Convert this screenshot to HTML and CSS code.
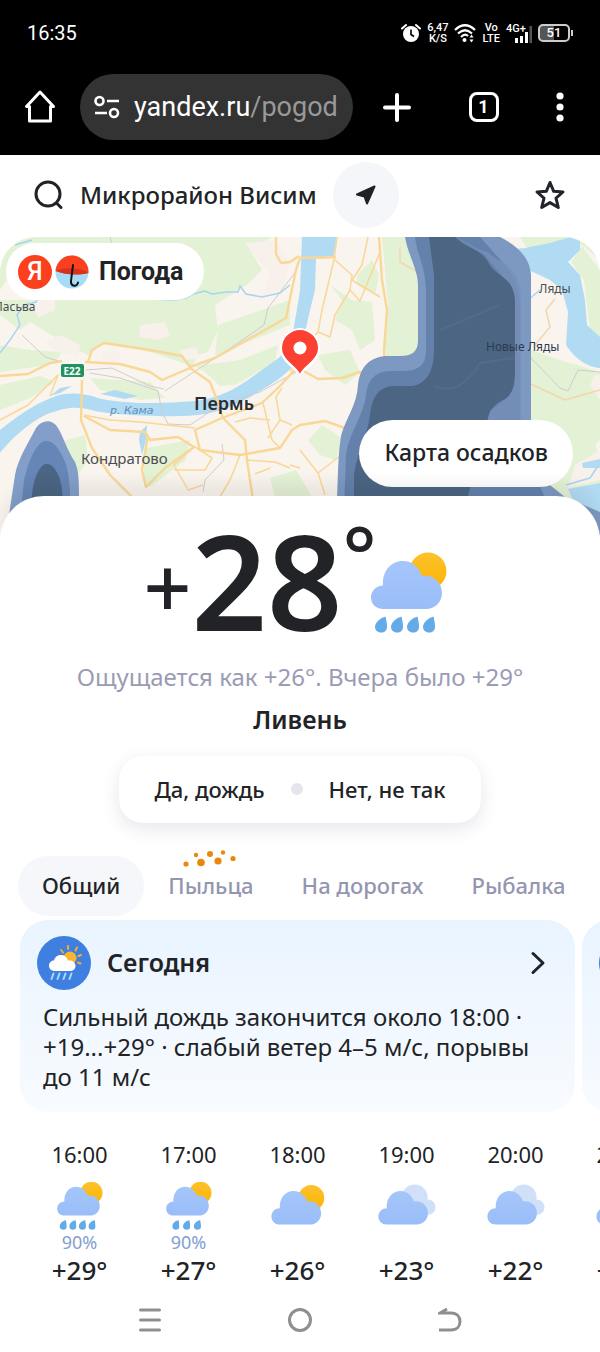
FILE: index.html
```html
<!DOCTYPE html>
<html lang="ru">
<head>
    <meta charset="UTF-8">
    <meta name="viewport" content="width=device-width, initial-scale=1">
    <title>Погода</title>
    <link rel="stylesheet" href="styles.css">
</head>
<body>
    <!-- icons used more than once -->
    <svg class="sprite" aria-hidden="true">
        <defs>
            <linearGradient id="cloudFill" x1="0" y1="0" x2="0" y2="1">
                <stop offset="0" stop-color="#a5c6fa"/>
                <stop offset="1" stop-color="#99bdf8"/>
            </linearGradient>
            <linearGradient id="sunFill" x1="0" y1="0" x2="0" y2="1">
                <stop offset="0" stop-color="#fcc22c"/>
                <stop offset="1" stop-color="#fdb304"/>
            </linearGradient>
        </defs>
        <symbol id="cloud" viewBox="0 0 80 58">
            <path fill="url(#cloudFill)" d="M14 57C7 57 2 52 2 45.500C2 38.500 7.500 33.500 14 33.500C13 19 22 9 34 9C43 9 50 15 53 24C64 22 73 30 73 41C73 50 66 57 57 57Z"/>
        </symbol>
        <symbol id="suncloud" viewBox="0 0 80 58">
            <circle cx="59" cy="19" r="18.500" fill="url(#sunFill)"/>
            <use href="#cloud" width="80" height="58"/>
        </symbol>
        <symbol id="clouds" viewBox="0 0 86 58">
            <circle cx="54" cy="18" r="18.500" fill="#cfe0f8"/>
            <circle cx="73" cy="32" r="11" fill="#cfe0f8"/>
            <use href="#cloud" width="80" height="58"/>
        </symbol>
        <symbol id="drop" viewBox="0 0 12 17">
            <path fill="#63abe8" d="M10.500 .5C11.300 4 12 7.500 12 11C12 14.500 9.500 16.500 6 16.500C2.500 16.500 0 14 0 11C0 6 5.500 2 10.500 .5Z"/>
        </symbol>
        <symbol id="rain4" viewBox="0 0 80 82">
            <use href="#suncloud" width="80" height="58"/>
            <use href="#drop" x="6" y="64" width="12" height="17"/>
            <use href="#drop" x="22" y="64" width="12" height="17"/>
            <use href="#drop" x="38" y="64" width="12" height="17"/>
            <use href="#drop" x="54" y="64" width="12" height="17"/>
        </symbol>
        <symbol id="rain3" viewBox="0 0 80 82">
            <use href="#suncloud" width="80" height="58"/>
            <use href="#drop" x="12" y="64" width="12" height="17"/>
            <use href="#drop" x="30" y="64" width="12" height="17"/>
            <use href="#drop" x="48" y="64" width="12" height="17"/>
        </symbol>
    </svg>

    <div class="status">
        <span class="clock">16:35</span>
        <div class="signals">
            <svg width="20" height="20" viewBox="0 0 20 20">
                <circle cx="10" cy="11" r="8" fill="#fff"/>
                <path d="M1 5.500L5 2M19 5.500L15 2" stroke="#fff" stroke-width="2" stroke-linecap="round"/>
                <path d="M10 6.500V11.500L13 13.500" fill="none" stroke="#000" stroke-width="1.600"/>
            </svg>
            <span class="mini">6,47<br>K/S</span>
            <svg width="22" height="20" viewBox="0 0 22 20">
                <g fill="none" stroke="#fff" stroke-width="2.200">
                    <path d="M1 7Q11 -2.500 21 7"/>
                    <path d="M4 10.500Q11 4 18 10.500"/>
                    <path d="M7 14Q11 10 14 13"/>
                </g>
                <circle cx="10.500" cy="17" r="2" fill="#fff"/>
                <path d="M17.500 11.500L19.500 14.500H15.500ZM17.500 19.500L15.500 16.500H19.500Z" fill="#fff"/>
            </svg>
            <span class="mini">Vo<br>LTE</span>
            <span class="net">
                <span class="mini">4G+</span>
                <svg width="26" height="20" viewBox="0 0 26 20">
                    <path d="M9 15h3v5H9zM14 13h3v7h-3zM19 9h3v11h-3z" fill="#fff"/>
                    <path d="M23.500 3H26v17h-2.500z" fill="#555"/>
                </svg>
            </span>
            <span class="battery">51</span>
        </div>
    </div>

    <div class="browser">
        <button class="home" aria-label="Домой">
            <svg width="32" height="36" viewBox="0 0 32 36" fill="none" stroke="#fff" stroke-width="3" stroke-linejoin="round" stroke-linecap="round">
                <path d="M16 3L2.500 17.500H5.500V32H26.500V17.500H29.500Z"/>
            </svg>
        </button>
        <button class="url">
            <svg width="26" height="24" viewBox="0 0 26 24" fill="none" stroke="#fff" stroke-width="2.600">
                <circle cx="5.500" cy="6" r="4"/>
                <path d="M13 6H25M1 18H13"/>
                <circle cx="20" cy="18" r="4"/>
            </svg>
            <span class="address">yandex.ru<i>/pogod</i></span>
        </button>
        <div class="tools">
            <button aria-label="Новая вкладка">
                <svg width="28" height="32" viewBox="0 0 28 32" stroke="#fff" stroke-width="4" stroke-linecap="round">
                    <path d="M14 4V29M2 16.500H26"/>
                </svg>
            </button>
            <button class="tabcount">1</button>
            <button aria-label="Меню">
                <svg width="8" height="32" viewBox="0 0 8 32" fill="#fff">
                    <circle cx="4" cy="5" r="3.600"/><circle cx="4" cy="16" r="3.600"/><circle cx="4" cy="27" r="3.600"/>
                </svg>
            </button>
        </div>
    </div>

    <header class="place">
        <button class="search">
            <svg width="30" height="30" viewBox="0 0 30 30" fill="none" stroke="#212326" stroke-width="3" stroke-linecap="round">
                <circle cx="14" cy="14" r="12"/>
                <path d="M22.500 23L27 27.500"/>
            </svg>
            Микрорайон Висим
        </button>
        <button class="locate" aria-label="Моё местоположение">
            <svg width="22" height="22" viewBox="0 0 22 22" fill="#1f2126" stroke="#1f2126" stroke-width="2" stroke-linejoin="round">
                <path d="M19.500 2.500L2 10.500L9.500 12.500L12 19.500Z"/>
            </svg>
        </button>
        <button class="star" aria-label="В избранное">
            <svg width="32" height="32" viewBox="0 0 32 32" fill="none" stroke="#22242c" stroke-width="3" stroke-linejoin="round">
                <path d="M16 3.500L19.700 12.300L29 13L22 19.200L24.300 28.500L16 23.600L7.700 28.500L10 19.200L3 13L12.300 12.300Z"/>
            </svg>
        </button>
    </header>

    <section class="map">
        <svg class="map-pic" viewBox="0 237 600 298" preserveAspectRatio="xMidYMin slice">
            <rect y="237" width="600" height="298" fill="#f9f5ee"/>
            <!-- woods -->
            <g fill="#e3f1d5">
                <path d="M0 237H272L250 250L262 270L248 284L215 305L218 330L208 352L198 355L192 366L150 352L105 342L88 355L68 345L30 322L20 330L0 315V300L40 300V270L10 275L0 290Z"/>
                <path d="M0 345L30 350L62 352L55 364L0 372Z"/>
                <path d="M0 385L40 376L55 382L30 398L0 410Z"/>
                <path d="M90 378L150 382L165 398L140 400L100 390Z"/>
                <path d="M218 325L262 310L290 300L290 325L240 345L215 356ZM195 366L240 360L278 345L275 362L235 385L220 386L205 372Z"/>
                <path d="M146 448L190 440L186 460L150 487L143 480Z"/>
                <path d="M60 442L85 435L88 460L78 475Z"/>
                <path d="M382 237H406L419 285V355L388 362L384 345L388 305Z"/>
                <path d="M357 275L372 260L379 275L375 295L357 285ZM330 285L352 300L372 302L375 340L360 350L352 330L335 320L342 300Z"/>
                <path d="M318 355L350 350L360 372L345 385L325 370ZM308 440L322 425L345 440L335 460L320 455ZM270 478L296 470L312 497H275Z"/>
                <path d="M520 237H600V260L582 245L555 243L528 250ZM571 262L582 246L600 270V337L590 330L584 280Z"/>
                <path d="M531 350L560 360L600 372V440L570 470L531 420Z"/>
                <path d="M531 440L590 425L600 460V535H500Z"/>
            </g>
            <g fill="#f8f0ea">
                <path d="M245 243L275 240L290 262L282 290L262 296L270 275Z"/>
                <path d="M140 325L165 322L170 336L158 340L139 337Z"/>
                <path d="M45 342L60 335L80 345L78 356L55 352ZM180 350L196 347L200 358L184 360Z"/>
                <path d="M30 301L55 298V310L38 318ZM100 352L118 350L122 360L105 364ZM595 375H600V400L590 385Z"/>
                <path d="M575 465L600 450V480L568 488Z"/>
            </g>
            <!-- water -->
            <g fill="#b1dbf3">
                <path d="M0 430C25 410 40 402 56 396C68 392 85 393 98 398C120 404 160 404 195 401C222 398 240 386 255 375C268 365 283 357 291 345C293 330 298 305 300 290L302 237H337L333 258L316 259L315 290C310 310 304 335 302 350C295 372 270 385 250 397C225 411 205 416 180 416C150 417 110 414 95 411C75 405 65 408 50 413C30 421 10 440 0 453Z"/>
                <path d="M503 250L525 248L550 243L570 237L580 241L580 250L568 262L580 275L585 300L587 325L600 337V368C590 367 577 362 566 345L568 312L562 290L550 280L520 266Z"/>
                <path d="M600 483L568 489L575 505L600 525ZM582 463L600 459V468L583 468Z"/>
                <path d="M100 394L115 390L138 396L125 399ZM140 432L147 425L146 440L142 455L139 440ZM60 393L72 386L60 388L50 396Z"/>
            </g>
            <g fill="none" stroke="#a9d4f0" stroke-width="1.500">
                <path d="M150 299L175 300L186 298L193 294L205 291L212 294L226 292L238 292L240 286L246 294L262 297L280 293L290 285"/>
                <path d="M0 353L10 340L20 325L17 315L24 305L36 302L37 300"/>
                <path d="M15 245L32 240M540 290L528 300M566 485L590 478L598 466"/>
            </g>
            <!-- railways -->
            <g fill="none" stroke="#cfcbd0" stroke-width="1">
                <path d="M22 335L45 357L62 362M86 370L112 368L150 386L164 389M90 373L120 378L158 391L162 412L168 424L190 425L220 405L260 392L296 372"/>
                <path d="M297 270L268 308L264 325L235 345L165 391M222 444L224 460L205 480L203 492M110 237L114 252"/>
                <path d="M531 358L560 388L568 391L578 370L600 372"/>
            </g>
            <!-- roads -->
            <g fill="none" stroke="#f8d797" stroke-width="1.500" stroke-linejoin="round">
                <g stroke-width="2.400">
                    <path d="M0 376L28 374L50 363L62 361"/>
                    <path d="M82 380L81 420L92 448L110 475L135 500"/>
                    <path d="M88 362L92 350L104 343L150 350L182 356L190 367L215 358L240 344L286 318L296 270L300 258L336 257"/>
                    <path d="M85 362L120 364L150 372L162 380L190 368L210 382L217 400L223 418L222 417L245 440L247 460L253 500"/>
                    <path d="M276 237L276 254L281 263L290 262L299 256M379 237L382 280L387 310L384 350L385 375L360 372L342 378L318 379L302 370"/>
                    <path d="M302 362L280 386L262 403L222 418L195 430L200 450L240 455L280 448L292 430L300 425L325 421L345 428"/>
                    <path d="M84 416L110 430L145 432L150 440L178 437L194 447L165 468L146 487L142 470L148 435"/>
                </g>
                <path d="M0 420L28 405L58 375L50 396M84 415L110 420L140 422L195 428M337 237L334 260L322 310L318 332L302 350L290 372"/>
                <path d="M194 447L174 465L188 490L203 485M240 455L230 480L218 500M195 447L212 458L205 470L174 470M263 403L272 440L280 448M235 422L250 418L270 420M292 425L280 420L276 397L282 388M280 420L268 438"/>
                <path d="M335 260L352 275L350 290L360 301L380 252M368 237L362 265L352 280L380 297M350 290L335 315L330 337L318 332M300 450L318 473L325 495M318 473L345 452M290 465L300 468M247 460L275 462L290 468M255 474L270 468"/>
                <path d="M531 384L565 400L600 390M555 299L546 310L550 327L535 345M400 247L400 262L418 272" stroke="#f3d6ad"/>
            </g>

            <!-- precipitation -->
            <path fill="#7d99c2" d="M405 237C408 255 418 270 418 285V340C418 352 412 356 400 356H385C368 358 360 368 358 385C357 405 345 420 341 436C338 455 338 475 337 500V535H600V512L565 497L531 470V275C530 258 518 246 500 237Z"/>
            <path fill="#6481ab" d="M415 237C417 255 425 265 426 290V350C426 364 420 370 405 371H388C372 373 368 382 366 395C364 415 348 435 346 455L343 535H560L540 486L520 465V310C520 285 510 270 497 256L480 237Z"/>
            <path fill="#7890b9" opacity=".8" d="M455 237C470 243 478 251 488 252C500 265 520 262 521 300V420H480C495 405 510 400 514 385V300C510 280 495 270 485 255Z"/>
            <path fill="#4b6583" d="M429 237L434 275V350C434 370 427 384 412 386H392C376 388 372 400 370 415C368 435 356 455 354 475V535H458L488 418C490 408 496 403 503 400C513 395 515 385 515 370V300C513 275 496 278 488 262C480 248 468 250 455 237Z"/>
            <path fill="none" stroke="#546b8b" stroke-width="2" d="M440 330L500 305M434 386C455 395 470 380 480 363L514 358"/>
            <g>
                <path fill="#839fc9" d="M9 515L15 475C18 458 30 440 36 428C42 419 53 419 58 428C64 438 66 448 75 462C80 474 79 485 79 535H9Z"/>
                <path fill="#6686b7" d="M20 520L24 480C28 465 32 450 42 442C48 439 55 442 60 452C68 465 71 475 71 535Z"/>
                <path fill="#4b6583" d="M31 535C30 490 34 474 43 465C47 463 51 464 54 468C62 478 64 490 63 535Z"/>
            </g>

            <g class="map-text">
                <text x="-6" y="311">Пасьва</text>
                <text x="539" y="293">Ляды</text>
                <text x="486" y="351" fill="#2d3a50">Новые Ляды</text>
                <text x="194" y="410" class="city">Пермь</text>
                <text x="81" y="464" class="suburb">Кондратово</text>
                <text x="110" y="414" class="river">р. Кама</text>
            </g>
            <rect x="61" y="364" width="23" height="13" rx="2" fill="#1f935f"/>
            <text x="72" y="375" class="road-no">E22</text>

            <!-- pin -->
            <path fill="#fff" d="M300 377C296 368 280 363 280 348A20 20 0 0 1 320 348C320 363 304 368 300 377Z"/>
            <path fill="#fc4032" d="M300 374C297 366 282 360 282 348A18 18 0 0 1 318 348C318 360 303 366 300 374Z"/>
            <circle cx="300" cy="348" r="6.500" fill="#fff"/>
        </svg>
        <a class="logo" href="#">
            <span class="ya">Я</span>
            <svg width="34" height="34" viewBox="0 0 34 34">
                <circle cx="17" cy="17" r="16.500" fill="#a6dcf8"/>
                <path fill="#fc3f1d" d="M.5 16A16.500 16.500 0 0 1 33.500 18C22 20.500 11 20 .5 16Z"/>
                <path fill="#c92c1c" d="M.5 16C8 13 13 13 18 13.500C24 14 30 15 33.500 18C22 20.500 11 20 .5 16Z" opacity=".7"/>
                <path d="M18 10L16 26C15.500 32 22.500 32 23 27.500" fill="none" stroke="#111" stroke-width="2" stroke-linecap="round"/>
            </svg>
            <span>Погода</span>
        </a>
        <a class="rain-map" href="#">Карта осадков</a>
    </section>

    <main class="sheet">
        <div class="now">
            <div class="degrees"><span class="sign">+</span>28<span class="ring">°</span></div>
            <svg class="now-icon" width="80" height="82"><use href="#rain4"/></svg>
        </div>
        <p class="feels">Ощущается как +26°. Вчера было +29°</p>
        <h1>Ливень</h1>
        <div class="answer">
            <button>Да, дождь</button>
            <span class="point"></span>
            <button>Нет, не так</button>
        </div>

        <nav class="tabs">
            <button class="active">Общий</button>
            <button class="pollen">
                <svg width="54" height="18" viewBox="0 0 54 18" fill="#e8890c">
                    <circle cx="3" cy="14" r="2.600"/><circle cx="13" cy="5" r="2.200"/><circle cx="18" cy="12.500" r="3.800"/>
                    <circle cx="27" cy="4" r="3"/><circle cx="35" cy="11" r="3.600"/><circle cx="40" cy="2.500" r="2.200"/><circle cx="50" cy="8.500" r="2.600"/>
                </svg>
                Пыльца
            </button>
            <button>На дорогах</button>
            <button>Рыбалка</button>
        </nav>

        <div class="cards">
            <article class="card">
                <div class="card-head">
                    <svg width="54" height="54" viewBox="0 0 54 54">
                        <circle cx="27" cy="27" r="27" fill="#3f7fe0"/>
                        <g stroke="#f5ae2d" stroke-width="2" stroke-linecap="round">
                            <path d="M31 10V13M40 11.500L38.500 14.500M44 19L41.500 20M43.500 27.500L41 26.500M24 14L26 16.500"/>
                        </g>
                        <circle cx="33" cy="22" r="6.500" fill="#f9b52f"/>
                        <path fill="#fff" d="M18 35C14 35 12 32.500 12 29.500C12 26.500 14.500 24.500 17 24.500C18 20.500 21 19 24 19C27.500 19 30 21 31 24.500C35 24 38.500 26 38.500 30C38.500 33 36 35 33 35Z"/>
                        <path d="M16.500 37.500L14.500 43M22.500 37.500L20.500 43M28.500 37.500L26.500 43M34.500 37.500L32.500 43" stroke="#a5daf8" stroke-width="2" stroke-linecap="round"/>
                    </svg>
                    <h2>Сегодня</h2>
                    <svg width="16" height="24" viewBox="0 0 16 24" fill="none" stroke="#212326" stroke-width="3" stroke-linecap="round" stroke-linejoin="round">
                        <path d="M3 2.500L13 12L3 21.500"/>
                    </svg>
                </div>
                <p>Сильный дождь закончится около 18:00 · +19...+29° · слабый ветер 4–5 м/с, порывы до 11 м/с</p>
            </article>
            <article class="card">
                <div class="card-head">
                    <svg width="54" height="54" viewBox="0 0 54 54"><circle cx="27" cy="27" r="27" fill="#3f7fe0"/></svg>
                </div>
            </article>
        </div>

        <ul class="hours">
            <li>
                <time>16:00</time>
                <svg width="48" height="50"><use href="#rain4"/></svg>
                <small>90%</small>
                <b>+29°</b>
            </li>
            <li>
                <time>17:00</time>
                <svg width="48" height="50"><use href="#rain3"/></svg>
                <small>90%</small>
                <b>+27°</b>
            </li>
            <li>
                <time>18:00</time>
                <svg class="dry" width="56" height="42"><use href="#suncloud"/></svg>
                <b>+26°</b>
            </li>
            <li>
                <time>19:00</time>
                <svg class="dry" width="60" height="42"><use href="#clouds"/></svg>
                <b>+23°</b>
            </li>
            <li>
                <time>20:00</time>
                <svg class="dry" width="60" height="42"><use href="#clouds"/></svg>
                <b>+22°</b>
            </li>
            <li>
                <time>21:00</time>
                <svg class="dry" width="60" height="42"><use href="#clouds"/></svg>
                <b>+21°</b>
            </li>
        </ul>
    </main>

    <nav class="system">
        <button aria-label="Недавние">
            <svg width="24" height="26" viewBox="0 0 24 26" stroke="#8f8f8f" stroke-width="3" stroke-linecap="round">
                <path d="M2.500 3H21.500M2.500 13H21.500M2.500 23H21.500"/>
            </svg>
        </button>
        <button aria-label="Главный экран">
            <svg width="26" height="26" viewBox="0 0 26 26" fill="none" stroke="#8f8f8f" stroke-width="3">
                <circle cx="13" cy="13" r="10.500"/>
            </svg>
        </button>
        <button aria-label="Назад">
            <svg width="24" height="26" viewBox="0 0 24 26" fill="none" stroke="#8f8f8f" stroke-width="3">
                <path d="M1 23H13C19 23 22 19 22 14.500C22 10 19 6 13 6H2L9 2"/>
            </svg>
        </button>
    </nav>
</body>
</html>
```
FILE: styles.css
```css
* {
    margin: 0;
    padding: 0;
    box-sizing: border-box;
}
body{
    background-color: #fff;
    color: #212326;
    font-family: "Noto Sans", "Open Sans", sans-serif;
    overflow-x: hidden;
}
button{
    border: 0;
    background: none;
    font: inherit;
    color: inherit;
    white-space: nowrap;
}
a{
    color: inherit;
    text-decoration: none;
}
svg{
    display: block;
    flex: none;
}
.sprite{
    position: absolute;
    width: 0;
    height: 0;
}

/* status bar */
.status{
    display: flex;
    justify-content: space-between;
    align-items: center;
    height: 66px;
    padding: 0 30px 0 27px;
    background-color: #000;
    color: #fff;
    font-family: Roboto, sans-serif;
}
.clock{
    font-size: 20px;
}
.signals{
    display: flex;
    align-items: center;
    gap: 6px;
}
.mini{
    font-size: 11px;
    line-height: 11px;
    font-weight: 500;
    text-align: center;
}
.net{
    display: grid;
}
.net>*{
    grid-area: 1 / 1;
}
.net .mini{
    text-align: left;
}
.battery{
    position: relative;
    width: 32px;
    height: 18px;
    border: 2px solid #ccc;
    border-radius: 5px;
    background: linear-gradient(to right, #555 50%, #000 50%);
    font-size: 13px;
    line-height: 14px;
    font-weight: 500;
    text-align: center;
}
.battery::after{
    content: "";
    position: absolute;
    top: 4px;
    right: -5px;
    width: 2px;
    height: 6px;
    background-color: #ccc;
}

/* browser bar */
.browser{
    display: flex;
    align-items: center;
    height: 89px;
    padding: 0 36px 8px 24px;
    background-color: #000;
    color: #fff;
    font-family: Roboto, sans-serif;
}
.url{
    display: flex;
    align-items: center;
    gap: 14px;
    width: 273px;
    height: 66px;
    margin: 0 30px 0 24px;
    padding: 0 12px 0 14px;
    border-radius: 33px;
    background-color: #333;
    font-size: 27px;
}
.address i{
    font-style: normal;
    color: #999;
}
.tools{
    display: flex;
    flex: 1;
    align-items: center;
    justify-content: space-between;
}
.tabcount{
    width: 30px;
    height: 30px;
    border: 3px solid #fff;
    border-radius: 8px;
    font-size: 18px;
    line-height: 24px;
    font-weight: 700;
}

/* place */
.place{
    display: flex;
    align-items: center;
    height: 82px;
    padding: 0 34px 3px;
    gap: 16px;
}
.search{
    display: flex;
    align-items: center;
    gap: 16px;
    font-size: 24px;
    font-weight: 500;
}
.locate{
    display: flex;
    align-items: center;
    justify-content: center;
    width: 66px;
    height: 66px;
    border-radius: 50%;
    background-color: #f5f6f9;
}
.star{
    margin-left: auto;
}

/* map */
.map{
    position: relative;
    height: 298px;
    border-radius: 36px 36px 0 0;
    overflow: hidden;
}
.map-pic{
    width: 100%;
    height: 100%;
}
.map-text{
    font-size: 12px;
    fill: #4a4d52;
}
.suburb{
    font-size: 15px;
}
.city{
    font-size: 18px;
    font-weight: 600;
    fill: #2b2d31;
}
.river{
    font-family: "DejaVu Sans", sans-serif;
    font-size: 11px;
    font-style: italic;
    fill: #5f8fc0;
}
.road-no{
    font-size: 10px;
    font-weight: 700;
    fill: #fff;
    text-anchor: middle;
}
.logo{
    position: absolute;
    top: 6px;
    left: 6px;
    display: flex;
    align-items: center;
    height: 57px;
    padding: 0 21px 0 12px;
    gap: 3px;
    border-radius: 29px;
    background-color: #fff;
    font: 700 25px Roboto, sans-serif;
}
.logo span:last-child{
    margin-left: 7px;
}
.logo .ya{
    width: 34px;
    height: 34px;
    border-radius: 50%;
    background-color: #fc3f1d;
    color: #fff;
    line-height: 34px;
    font-weight: 500;
    text-align: center;
}
.rain-map{
    position: absolute;
    right: 27px;
    bottom: 48px;
    height: 67px;
    padding: 0 25px;
    border-radius: 34px;
    background-color: #fff;
    font-size: 23px;
    line-height: 64px;
    font-weight: 500;
}

/* weather now */
.sheet{
    position: relative;
    margin-top: -39px;
    padding: 28px 0 4px;
    border-radius: 44px 44px 0 0;
    background-color: #fff;
    box-shadow: 0 -14px 14px rgba(0, 0, 0, 0.06);
    overflow: hidden;
    text-align: center;
}
.now{
    display: flex;
    justify-content: center;
    height: 128px;
    padding-right: 8px;
}
.degrees{
    display: flex;
    font-size: 132px;
    line-height: 112px;
    font-weight: 600;
}
.sign{
    font-size: 84px;
    line-height: 124px;
    font-weight: 500;
}
.ring{
    font-size: 80px;
    line-height: 60px;
    font-weight: 500;
}
.now-icon{
    margin: 28px 0 0 -8px;
}
.feels{
    margin-top: 8px;
    color: #9a9cb4;
    font-size: 24px;
    line-height: 34px;
}
h1{
    margin-top: 8px;
    font-size: 25px;
    line-height: 34px;
    font-weight: 600;
}
.answer{
    display: flex;
    justify-content: center;
    align-items: center;
    gap: 26px;
    width: 362px;
    height: 67px;
    margin: 20px auto 0;
    padding-bottom: 2px;
    border-radius: 24px;
    box-shadow: 0 6px 18px rgba(60, 60, 110, 0.12);
    font-size: 22px;
    font-weight: 500;
}
.point{
    width: 12px;
    height: 12px;
    border-radius: 50%;
    background-color: #e5e5ed;
}
.tabs{
    display: flex;
    height: 60px;
    margin-top: 33px;
    padding-left: 18px;
    color: #9496b0;
    font-size: 22px;
    font-weight: 500;
}
.tabs button{
    padding: 0 24px 2px;
    border-radius: 30px;
}
.tabs .active{
    background-color: #f6f7fa;
    color: #212326;
}
.pollen{
    position: relative;
}
.pollen svg{
    position: absolute;
    top: -6px;
    left: 39px;
}

/* cards */
.cards{
    display: flex;
    gap: 7px;
    margin-top: 4px;
    padding-left: 20px;
}
.card{
    flex: none;
    width: calc(100% - 25px);
    padding: 16px 23px 20px;
    border-radius: 28px;
    background: linear-gradient(#e9f4ff, #f8fbff);
    text-align: left;
}
.card-head{
    display: flex;
    align-items: center;
    gap: 16px;
    margin: 0 6px 0 -6px;
}
.card h2{
    flex: 1;
    padding-bottom: 2px;
    font-size: 25px;
    font-weight: 600;
    line-height: 34px;
}
.card p{
    margin-top: 12px;
    font-size: 24px;
    line-height: 30px;
}

/* hours */
.hours{
    display: flex;
    margin-top: 26px;
    padding-left: 25px;
    list-style: none;
}
.hours li{
    display: flex;
    flex: none;
    flex-direction: column;
    align-items: center;
    width: 109px;
    height: 148px;
}
.hours time{
    font-size: 22px;
    line-height: 32px;
}
.hours svg{
    margin-top: 11px;
}
.hours .dry{
    margin-top: 14px;
}
.hours small{
    color: #83a0d0;
    font-size: 18px;
    line-height: 23px;
}
.hours b{
    margin-top: auto;
    font-size: 26px;
    line-height: 32px;
    font-weight: 500;
}

/* system buttons */
.system{
    display: flex;
    height: 60px;
    padding: 0 12.5%;
}
.system button{
    display: flex;
    flex: 1;
    align-items: center;
    justify-content: center;
}
```
